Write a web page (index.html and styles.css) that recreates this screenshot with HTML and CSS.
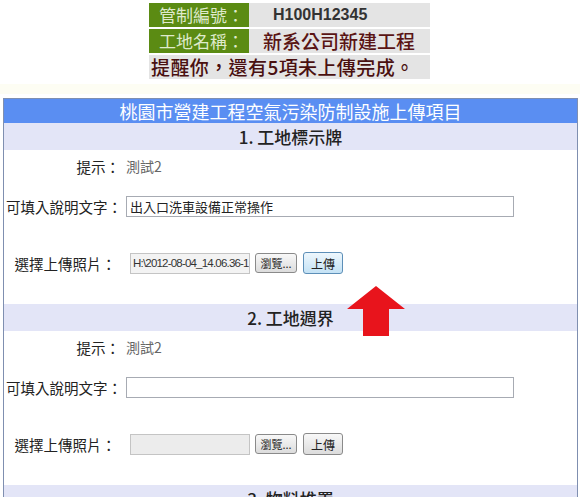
FILE: index.html
```html
<!DOCTYPE html>
<html>
<head>
    <meta charset="utf-8">
    <title>上傳項目</title>
    <link rel="stylesheet" href="styles.css">
</head>
<body>
    <div class="info">
        <div class="info-row">
            <div class="info-label">管制編號：</div>
            <div class="info-value code">H100H12345</div>
        </div>
        <div class="info-row">
            <div class="info-label">工地名稱：</div>
            <div class="info-value name">新系公司新建工程</div>
        </div>
        <div class="info-row">
            <div class="info-notice">提醒你，還有5項未上傳完成。</div>
        </div>
    </div>
    <div class="band"></div>

    <div class="panel">
        <div class="panel-title">桃園市營建工程空氣污染防制設施上傳項目</div>

        <div class="section-title">1. 工地標示牌</div>
        <div class="section">
            <div class="row tip">
                <div class="label">提示：</div>
                <div class="hint">測試2</div>
            </div>
            <div class="row desc">
                <div class="label wide">可填入說明文字：</div>
                <input type="text" class="text-input" value="出入口洗車設備正常操作">
            </div>
            <div class="row photo">
                <div class="label">選擇上傳照片：</div>
                <div class="file-field">H:\2012-08-04_14.06.36-1</div>
                <button class="btn browse">瀏覽...</button>
                <button class="btn upload active">上傳</button>
                <svg class="arrow" width="58" height="50" viewBox="0 0 58 50">
                    <polygon points="29,0 58,23 42,23 42,50 16,50 16,23 0,23" fill="#e8141c"/>
                </svg>
            </div>
        </div>

        <div class="section-title">2. 工地週界</div>
        <div class="section">
            <div class="row tip">
                <div class="label">提示：</div>
                <div class="hint">測試2</div>
            </div>
            <div class="row desc">
                <div class="label wide">可填入說明文字：</div>
                <input type="text" class="text-input" value="">
            </div>
            <div class="row photo">
                <div class="label">選擇上傳照片：</div>
                <div class="file-field empty"></div>
                <button class="btn browse">瀏覽...</button>
                <button class="btn upload">上傳</button>
            </div>
        </div>

        <div class="section-title">3. 物料堆置</div>
    </div>
</body>
</html>
```
FILE: styles.css
```css
body {
    margin: 0;
    font-family: "Noto Sans CJK TC", "Liberation Sans", sans-serif;
    background: #fff;
    color: #222;
}
.info {
    width: 281px;
    margin: 3px 0 0 149px;
}
.info-row {
    display: flex;
    height: 24px;
    margin-bottom: 2px;
    background: #e4e4e4;
}
.info-label {
    width: 100px;
    background: #5b8b13;
    color: #dfeacb;
    font-size: 17px;
    line-height: 24px;
    padding-left: 10px;
    box-sizing: border-box;
}
.info-value {
    flex: 1;
    line-height: 24px;
}
.info-value.code {
    font-family: "Liberation Sans", Arial, sans-serif;
    font-weight: bold;
    font-size: 16px;
    color: #333;
    padding-left: 24px;
}
.info-value.name {
    font-size: 19px;
    color: #5a1414;
    padding-left: 14px;
    font-weight: 500;
}
.info-notice {
    font-size: 19px;
    line-height: 24px;
    color: #4a1010;
    font-weight: 500;
    padding-left: 2px;
    letter-spacing: 0.4px;
}
.band {
    height: 10px;
    margin-top: 5px;
    background: #fdfdf3;
}
.panel {
    margin: 4px 2px 0 3px;
    border: 1px solid #7f8fb0;
    border-bottom: none;
}
.panel-title {
    background: #5a8ef2;
    color: #fff;
    text-align: center;
    font-size: 18px;
    height: 24px;
    line-height: 24px;
}
.section-title {
    background: #e3e5f7;
    text-align: center;
    font-size: 17px;
    font-weight: 500;
    color: #222;
    height: 27px;
    line-height: 27px;
}
.section {
    padding-bottom: 8px;
    font-size: 14px;
}
.row {
    display: flex;
    align-items: center;
    position: relative;
}
.row.tip {
    height: 32px;
}
.row.desc {
    height: 48px;
}
.row.photo {
    height: 66px;
}
.label {
    width: 116px;
    text-align: right;
    color: #222;
    font-size: 14.5px;
    flex-shrink: 0;
}
.label.wide {
    width: 120px;
    text-align: left;
    padding-left: 2px;
}
.row.photo .label {
    width: 112px;
}
.hint {
    color: #666;
    margin-left: 6px;
}
.text-input {
    width: 388px;
    height: 21px;
    box-sizing: border-box;
    border: 1px solid #a7abb3;
    font-family: inherit;
    font-size: 13px;
    padding: 0 3px;
    color: #222;
    margin-left: 0;
}
.file-field {
    width: 120px;
    height: 21px;
    box-sizing: border-box;
    border: 1px solid #c4c4c4;
    background: #f3f3f3;
    margin-left: 14px;
    font-family: "Liberation Sans", Arial, sans-serif;
    font-size: 11.5px;
    letter-spacing: -0.8px;
    line-height: 19px;
    padding-left: 2px;
    white-space: nowrap;
    overflow: hidden;
    color: #333;
}
.file-field.empty {
    background: #ececec;
}
.btn {
    height: 20px;
    box-sizing: border-box;
    border: 1px solid #8a8a8a;
    border-radius: 3px;
    background: linear-gradient(#f8f8f8, #dcdcdc);
    font-family: inherit;
    font-size: 12px;
    color: #222;
    padding: 0;
    margin-left: 5px;
    line-height: 17px;
    white-space: nowrap;
}
.btn.browse {
    width: 42px;
    font-size: 11px;
}
.btn.upload {
    width: 40px;
    height: 22px;
    margin-left: 6px;
}
.btn.active {
    border-color: #5d8fb8;
    background: linear-gradient(#eef7fd, #c4e2f5);
}
.arrow {
    position: absolute;
    left: 343px;
    top: 56px;
    z-index: 2;
}
```
